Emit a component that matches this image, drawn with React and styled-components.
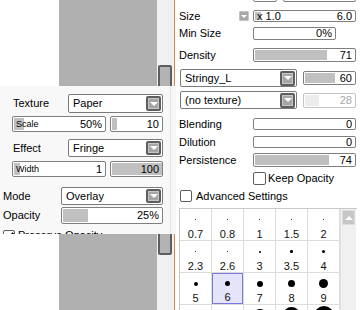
import React from 'react'
import styled, { createGlobalStyle } from 'styled-components'

const GlobalStyle = createGlobalStyle`
  html, body {
    margin: 0;
    padding: 0;
  }
  body {
    font-family: "Liberation Sans", Arial, sans-serif;
    font-size: 11px;
    line-height: 13px;
    color: #000;
  }
`

const Screen = styled.div`
  position: relative;
  display: flex;
  width: 360px;
  height: 310px;
  overflow: hidden;
  background: #fff;
`

const Workspace = styled.div`
  display: flex;
  flex: none;
  width: 174px;
`

const Gutter = styled.div`
  width: 59px;
  background: #fff;
`

const Canvas = styled.div`
  width: 98px;
  background: #b0b0b0;
`

const Track = styled.div`
  box-sizing: border-box;
  width: 17px;
  padding: 65px 0 0 1px;
  background: #f0f0f0;
`

const Thumb = styled.div`
  box-sizing: border-box;
  width: 14px;
  height: 190px;
  border: 2px solid #5e5e5e;
  border-radius: 2px;
  background: #b3b3b3;
`

const Divider = styled.div`
  flex: none;
  width: 1px;
  background: #d3884b;
`

const Floating = styled.div`
  position: absolute;
  left: 0;
  top: 86px;
  width: 176px;
  height: 148px;
  padding-top: 8px;
  box-sizing: border-box;
  overflow: hidden;
  background: #f8f8f8;
  box-shadow: inset -5px 0 0 #f6f6f6, inset -6px 0 0 #e2e2e2;
`

const Panel = styled.div`
  flex: 1;
  display: flex;
  flex-direction: column;
  padding-left: 4px;
  background: #fff;
`

const Row = styled.div`
  display: flex;
  align-items: ${p => p.$align || 'center'};
  gap: ${p => p.$gap || 0}px;
  height: ${p => p.$h}px;
  margin-top: ${p => p.$mt || 0}px;
  padding-left: ${p => p.$pl || 0}px;
  flex: none;
`

const Label = styled.span`
  flex: none;
  width: ${p => p.$w}px;
  white-space: nowrap;
`

const Combo = styled.div`
  box-sizing: border-box;
  display: flex;
  align-items: center;
  justify-content: space-between;
  flex: none;
  width: ${p => p.$w}px;
  height: ${p => p.$h || 19}px;
  padding: 0 1px 0 4px;
  border: 1px solid #7a7a7a;
  border-radius: 2px;
  background: #fff;
  white-space: nowrap;
`

const DropButton = styled.span`
  box-sizing: border-box;
  display: flex;
  align-items: center;
  justify-content: center;
  width: 15px;
  height: ${p => p.$h || 15}px;
  border: 2px solid #5e5e5e;
  border-radius: 2px;
  background: #a6a6a6;
  box-shadow: inset 0 0 0 1px #c6c6c6;

  &::after {
    content: '';
    border-left: 4px solid transparent;
    border-right: 4px solid transparent;
    border-top: 4px solid #fff;
  }
`

const SmallButton = styled.span`
  box-sizing: border-box;
  display: flex;
  align-items: center;
  justify-content: center;
  flex: none;
  width: 10px;
  height: 10px;
  margin-right: 4px;
  border: 1px solid #c4c4c4;
  border-radius: 1px;
  background: #a8a8a8;

  &::after {
    content: '';
    border-left: 3px solid transparent;
    border-right: 3px solid transparent;
    border-top: 3px solid #fff;
  }
`

const Slider = styled.div`
  position: relative;
  box-sizing: border-box;
  display: flex;
  align-items: center;
  justify-content: space-between;
  flex: none;
  width: ${p => p.$w}px;
  height: ${p => p.$h || 13}px;
  padding: 0 3px 0 3px;
  border: 1px solid ${p => (p.$off ? '#c4c4c4' : '#7f7f7f')};
  border-radius: 2px;
  background: #fff;
  color: ${p => (p.$off ? '#a8a8a8' : '#000')};
  overflow: hidden;
  white-space: nowrap;
`

const Fill = styled.span`
  position: absolute;
  left: 1px;
  top: 1px;
  bottom: 1px;
  background: ${p => (p.$off ? '#ececec' : '#c0c0c0')};
`

const SliderText = styled.span`
  position: relative;
  font-size: ${p => (p.$small ? 9 : 11)}px;
  margin-left: auto;
`

const InnerLabel = styled.span`
  position: relative;
  font-size: 9px;
`

const Check = styled.span`
  box-sizing: border-box;
  position: relative;
  flex: none;
  width: ${p => p.$size || 12}px;
  height: ${p => p.$size || 12}px;
  margin-left: ${p => p.$ml || 0}px;
  margin-right: ${p => p.$mr || 3}px;
  border: 1px solid #5e5e5e;
  border-radius: 2px;
  background: #fff;

  ${p =>
    p.$checked &&
    `&::after {
      content: '';
      position: absolute;
      left: 3px;
      top: 0px;
      width: 3px;
      height: 6px;
      border-right: 2px solid #000;
      border-bottom: 2px solid #000;
      transform: rotate(40deg);
    }`}
`

const StubBox = styled.div`
  box-sizing: border-box;
  flex: none;
  width: ${p => p.$w}px;
  height: 13px;
  margin-left: ${p => p.$ml || 0}px;
  border: 1px solid #7f7f7f;
  border-radius: 2px;
`

const Grid = styled.div`
  display: flex;
  margin-top: 3px;
  width: 177px;
  border-left: 1px solid #c8c8c8;
  border-top: 1px solid #c8c8c8;
`

const Cells = styled.div`
  display: grid;
  grid-template-columns: repeat(5, 31px);
  grid-auto-rows: 31px;
  gap: 1px;
  padding-right: 1px;
  background: #dcdcdc;
`

const Cell = styled.div`
  box-sizing: border-box;
  display: flex;
  flex-direction: column;
  align-items: center;
  background: ${p => (p.$active ? '#e4e4fb' : '#fff')};
  border: ${p => (p.$active ? '1px solid #7a78e0' : 'none')};
  padding-top: ${p => (p.$active ? 0 : 1)}px;
`

const DotBox = styled.div`
  display: flex;
  align-items: center;
  justify-content: center;
  height: 21px;
`

const Dot = styled.span`
  display: block;
  border-radius: 50%;
  background: #000;
  flex: none;
`

const Num = styled.span`
  line-height: 11px;
  color: #111;
`

const GridBar = styled.div`
  box-sizing: border-box;
  width: 16px;
  padding: 1px;
  background: #f0f0f0;
  border-left: 1px solid #e2e2e2;
`

const UpButton = styled.div`
  box-sizing: border-box;
  display: flex;
  align-items: center;
  justify-content: center;
  height: 15px;
  border: 1px solid #dcdcdc;
  background: #c6c6c6;

  &::after {
    content: '';
    border-left: 4px solid transparent;
    border-right: 4px solid transparent;
    border-bottom: 4px solid #fff;
  }
`

const brushes = [
  ['0.7', 1], ['0.8', 1], ['1', 1], ['1.5', 1], ['2', 1],
  ['2.3', 1], ['2.6', 1], ['3', 2], ['3.5', 2.5], ['4', 3],
  ['5', 4], ['6', 5], ['7', 6], ['8', 7], ['9', 9],
  ['10', 9], ['12', 11], ['14', 14], ['16', 17], ['20', 20],
]

function Bar({ w, h, fill, off, label, value }) {
  return (
    <Slider $w={w} $h={h} $off={off}>
      {fill > 0 && <Fill $off={off} style={{ width: fill }} />}
      {label && <InnerLabel>{label}</InnerLabel>}
      <SliderText>{value}</SliderText>
    </Slider>
  )
}

export default function App() {
  return (
    <>
      <GlobalStyle />
      <Screen>
        <Workspace>
          <Gutter />
          <Canvas />
          <Track>
            <Thumb />
          </Track>
        </Workspace>
        <Divider />

        <Panel>
          <Row $h={2} $align="flex-end">
            <StubBox $w={24} $ml={74} />
            <StubBox $w={73} $ml={6} />
          </Row>
          <Row $h={18} $mt={5}>
            <Label $w={60}>Size</Label>
            <SmallButton />
            <Slider $w={103} $h={12}>
              <Fill style={{ width: 6 }} />
              <InnerLabel style={{ fontSize: 11 }}>x 1.0</InnerLabel>
              <SliderText>6.0</SliderText>
            </Slider>
          </Row>
          <Row $h={16}>
            <Label $w={74}>Min Size</Label>
            <Bar w={83} h={13} value="0%" />
          </Row>
          <Row $h={28}>
            <Label $w={74}>Density</Label>
            <Bar w={103} h={14} fill={72} value="71" />
          </Row>
          <Row $h={18} $pl={1} $gap={6}>
            <Combo $w={117} $h={18}>
              Stringy_L
              <DropButton />
            </Combo>
            <Bar w={53} h={14} fill={30} value="60" />
          </Row>
          <Row $h={18} $mt={4} $pl={1} $gap={6}>
            <Combo $w={117} $h={18}>
              (no texture)
              <DropButton />
            </Combo>
            <Bar w={53} h={15} fill={14} off value="28" />
          </Row>
          <Row $h={18} $mt={6}>
            <Label $w={74}>Blending</Label>
            <Bar w={103} h={12} value="0" />
          </Row>
          <Row $h={18}>
            <Label $w={74}>Dilution</Label>
            <Bar w={103} h={12} value="0" />
          </Row>
          <Row $h={18}>
            <Label $w={74}>Persistence</Label>
            <Bar w={103} h={14} fill={74} value="74" />
          </Row>
          <Row $h={18}>
            <Check $size={13} $ml={74} $mr={2} />
            Keep Opacity
          </Row>
          <Row $h={18} $pl={1}>
            <Check $size={12} $mr={4} />
            Advanced Settings
          </Row>
          <Grid>
            <Cells>
              {brushes.map(([n, d]) => (
                <Cell key={n} $active={n === '6'}>
                  <DotBox>
                    <Dot style={{ width: d, height: d }} />
                  </DotBox>
                  <Num>{n}</Num>
                </Cell>
              ))}
            </Cells>
            <GridBar>
              <UpButton />
            </GridBar>
          </Grid>
        </Panel>

        <Floating>
          <Row $h={19} $pl={13}>
            <Label $w={55}>Texture</Label>
            <Combo $w={95}>
              Paper
              <DropButton />
            </Combo>
          </Row>
          <Row $h={16} $mt={3} $pl={12} $gap={4}>
            <Bar w={94} h={16} fill={10} label="Scale" value="50%" />
            <Bar w={53} h={16} fill={5} value="10" />
          </Row>
          <Row $h={18} $mt={7} $pl={13}>
            <Label $w={55}>Effect</Label>
            <Combo $w={95} $h={18}>
              Fringe
              <DropButton $h={14} />
            </Combo>
          </Row>
          <Row $h={16} $mt={4} $pl={12} $gap={4}>
            <Bar w={94} h={16} fill={6} label="Width" value="1" />
            <Bar w={53} h={16} fill={51} value="100" />
          </Row>
          <Row $h={18} $mt={10} $pl={3}>
            <Label $w={58}>Mode</Label>
            <Combo $w={102} $h={18}>
              Overlay
              <DropButton $h={14} />
            </Combo>
          </Row>
          <Row $h={17} $mt={2} $pl={3}>
            <Label $w={58}>Opacity</Label>
            <Bar w={102} h={17} fill={25} value="25%" />
          </Row>
          <Row $h={13} $mt={5} $pl={3}>
            <Check $checked $mr={3} />
            Preserve Opacity
          </Row>
        </Floating>
      </Screen>
    </>
  )
}
